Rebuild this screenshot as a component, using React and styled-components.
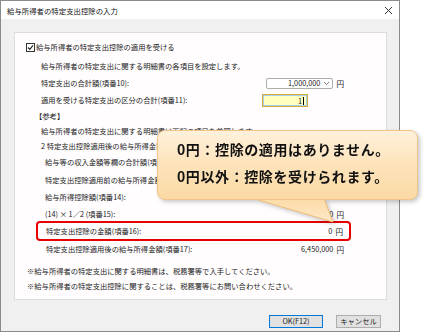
import React from 'react'
import styled, { createGlobalStyle } from 'styled-components';

const GlobalStyle = createGlobalStyle`
body {
    margin: 0;
    background: #ffffff;
    font-family: "Noto Sans CJK JP", "Noto Sans", sans-serif;
}
`;

const refRows = [
    { mt: 1, indent: 26, text: '給与所得者の特定支出に関する明細書は下記の項目を参照します。' },
    { mt: 1, indent: 26, text: '2 特定支出控除適用後の給与所得金額(項番17)の計算' },
    { mt: 2, indent: 30, text: '給与等の収入金額等欄の合計額(項番12):' },
    { mt: 4, indent: 30, text: '特定支出控除適用前の給与所得金額(項番13):' },
    { mt: 3, indent: 30, text: '給与所得控除額(項番14):' },
    { mt: 3, indent: 30, text: '(14) × 1／2 (項番15):', value: '0' },
];

const CloseIcon = () => (
    <svg width="9" height="9" viewBox="0 0 9 9">
        <path d="M1 1 L8 8 M8 1 L1 8" stroke="#333" strokeWidth="1" />
    </svg>
)

const CheckIcon = () => (
    <svg width="9" height="9" viewBox="0 0 9 9">
        <rect x="0.5" y="0.5" width="8" height="8" fill="#fff" stroke="#333" />
        <path d="M2 4.5 L3.8 6.4 L7 2.4" fill="none" stroke="#222" strokeWidth="1.1" />
    </svg>
)

const Chevron = () => (
    <svg width="7" height="5" viewBox="0 0 7 5">
        <path d="M1 1 L3.5 3.5 L6 1" fill="none" stroke="#666" strokeWidth="0.9" />
    </svg>
)

const App = () => {
    return (
        <>
            <GlobalStyle />
            <Page>
                <Window>
                    <TitleBar>
                        <span>給与所得者の特定支出控除の入力</span>
                        <CloseBox><CloseIcon /></CloseBox>
                    </TitleBar>
                    <Body>
                        <Panel>
                            <CheckRow>
                                <CheckIcon />
                                <span>給与所得者の特定支出控除の適用を受ける</span>
                            </CheckRow>
                            <Row $mt={5} $indent={26}>給与所得者の特定支出に関する明細書の各項目を設定します。</Row>
                            <Row $mt={3} $indent={26}>
                                <Label>特定支出の合計額(項番10):</Label>
                                <Value>
                                    <Combo>
                                        <span>1,000,000</span>
                                        <Chevron />
                                    </Combo>
                                    <Yen>円</Yen>
                                </Value>
                            </Row>
                            <Row $mt={3} $indent={26}>
                                <Label>適用を受ける特定支出の区分の合計(項番11):</Label>
                                <Value $start>
                                    <YellowInput>1<Caret /></YellowInput>
                                </Value>
                            </Row>
                            <Row $mt={2} $indent={20}>【参考】</Row>
                            {refRows.map((r, i) => (
                                <Row key={i} $mt={r.mt} $indent={r.indent}>
                                    <Label>{r.text}</Label>
                                    {r.value && <Value>{r.value}<Yen>円</Yen></Value>}
                                </Row>
                            ))}
                            <Highlight>
                                <Label>特定支出控除の金額(項番16):</Label>
                                <Value>0<Yen>円</Yen></Value>
                            </Highlight>
                            <Row $mt={1} $indent={31}>
                                <Label>特定支出控除適用後の給与所得金額(項番17):</Label>
                                <Value>6,450,000<Yen>円</Yen></Value>
                            </Row>
                            <Row $mt={8} $indent={12}>※給与所得者の特定支出に関する明細書は、税務署等で入手してください。</Row>
                            <Row $mt={1} $indent={12}>※給与所得者の特定支出控除に関することは、税務署等にお問い合わせください。</Row>
                        </Panel>
                        <Footer>
                            <Button $primary>OK(F12)</Button>
                            <Button>キャンセル</Button>
                        </Footer>
                    </Body>
                </Window>
                <Callout>
                    <Tail width="200" height="100" viewBox="0 0 200 100">
                        <defs>
                            <linearGradient id="tailFill" x1="0" y1="0" x2="0" y2="1">
                                <stop offset="0" stopColor="#fbd9a4" />
                                <stop offset="1" stopColor="#fde9c8" />
                            </linearGradient>
                        </defs>
                        <path d="M88 66 L176 92 L166 66" fill="url(#tailFill)" stroke="#f2bd72" strokeWidth="1" />
                    </Tail>
                    <Bubble>
                        <p>0円：控除の適用はありません。</p>
                        <p>0円以外：控除を受けられます。</p>
                    </Bubble>
                </Callout>
            </Page>
        </>
    )
}

export default App

const Page = styled.div`
position: relative;
width: 426px;
height: 334px;
overflow: hidden;
background: #ffffff;
`;

const Window = styled.div`
width: 400px;
height: 332px;
box-sizing: border-box;
border: 1px solid #8a8a8a;
background: #f0f0f0;
display: flex;
flex-direction: column;
font-size: 7.3px;
color: #222;
`;

const TitleBar = styled.div`
height: 18px;
flex: none;
background: #ffffff;
display: flex;
align-items: center;
justify-content: space-between;
padding-left: 6px;
font-size: 7.4px;
color: #111;
`;

const CloseBox = styled.div`
width: 20px;
display: flex;
justify-content: center;
margin-right: 1px;
`;

const Body = styled.div`
flex: 1;
padding: 13px 12px 0 13px;
display: flex;
flex-direction: column;
`;

const Panel = styled.div`
height: 268px;
box-sizing: border-box;
background: #fffdfe;
border: 1px solid #dcdcdc;
padding-top: 7px;
display: flex;
flex-direction: column;
`;

const CheckRow = styled.div`
height: 14px;
display: flex;
align-items: center;
gap: 1px;
padding-left: 11px;
`;

const Row = styled.div`
height: 14px;
margin-top: ${props => props.$mt}px;
padding-left: ${props => props.$indent}px;
padding-right: 42px;
display: flex;
align-items: center;
white-space: nowrap;
`;

const Label = styled.span`
flex: 1;
`;

const Value = styled.div`
width: 82px;
display: flex;
align-items: center;
justify-content: ${props => props.$start ? 'flex-start' : 'flex-end'};
`;

const Yen = styled.span`
margin-left: 3px;
font-size: 7.6px;
`;

const Combo = styled.div`
width: 67px;
height: 11px;
box-sizing: border-box;
border: 1px solid #adadad;
border-radius: 2px;
background: #fff;
display: flex;
align-items: center;
justify-content: flex-end;
gap: 3px;
padding-right: 2px;
`;

const YellowInput = styled.div`
width: 46px;
height: 13px;
box-sizing: border-box;
border: 1px solid #d9a93a;
box-shadow: inset 0 0 0 1px #9fd2f0;
background: #ffffbf;
display: flex;
align-items: center;
justify-content: flex-end;
padding-right: 3px;
margin-top: 1px;
`;

const Caret = styled.span`
width: 1px;
height: 8px;
background: #000;
margin-left: 1px;
`;

const Highlight = styled.div`
height: 20px;
box-sizing: border-box;
margin: 0 35px 0 21px;
border: 2px solid #e60000;
border-radius: 4px;
padding: 0 6px 0 8px;
display: flex;
align-items: center;
white-space: nowrap;
`;

const Footer = styled.div`
display: flex;
justify-content: flex-end;
gap: 13px;
margin-top: 15px;
padding-right: 6px;
`;

const Button = styled.button`
width: ${props => props.$primary ? '54px' : '45px'};
height: 13px;
padding: 0;
box-sizing: border-box;
border: 1px solid ${props => props.$primary ? '#0078d7' : '#adadad'};
background: #e1e1e1;
font-family: "Noto Sans CJK JP", sans-serif;
font-size: 7.3px;
color: #222;
line-height: 11px;
`;

const Callout = styled.div`
position: absolute;
left: 157px;
top: 130px;
width: 261px;
height: 100px;
filter: drop-shadow(2px 2px 2px rgba(0, 0, 0, 0.22));
`;

const Tail = styled.svg`
position: absolute;
left: 0;
top: 0;
`;

const Bubble = styled.div`
position: relative;
width: 261px;
height: 70px;
box-sizing: border-box;
border: 1px solid #f2c488;
border-radius: 8px;
background: linear-gradient(180deg, #fff1dc 0%, #fde4bd 45%, #fbd9a4 100%);
padding: 5px 0 0 19px;
p {
    margin: 0;
    font-size: 14px;
    font-weight: 700;
    line-height: 27px;
    letter-spacing: 0.6px;
    color: #111;
    white-space: nowrap;
}
`;
